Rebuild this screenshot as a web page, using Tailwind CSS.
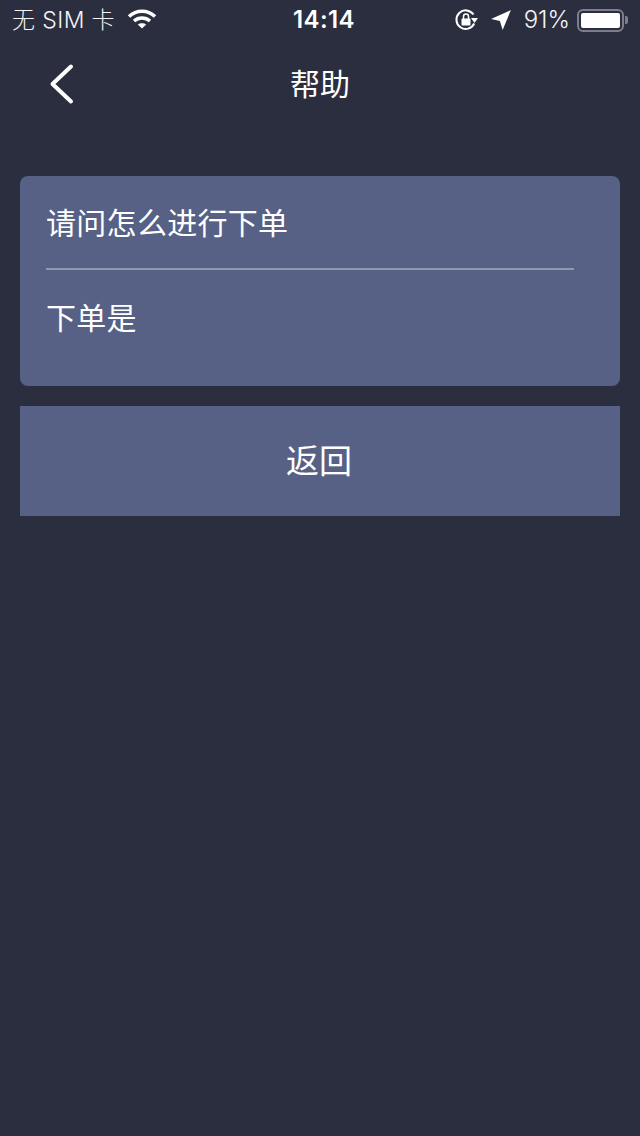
<!DOCTYPE html>
<html lang="zh-CN">
<head>
<meta charset="utf-8">
<script src="https://cdn.jsdelivr.net/npm/@tailwindcss/browser@4"></script>
</head>
<body class="m-0">
<div class="w-[640px] h-[1136px] bg-[#2b2e3f] text-white overflow-hidden font-['Inter','Noto_Sans_CJK_SC',sans-serif]">
  <div class="h-[40px] relative flex items-center justify-between pl-[12px] pr-[12px]">
    <div class="flex items-center">
      <span class="text-[23px] leading-[40px] tracking-[0.4px] text-[#f4f4f6] font-light">无 SIM 卡</span>
      <svg class="ml-[12px] mb-[2px]" width="30" height="22" viewBox="0 0 30 22" fill="none" stroke="white" stroke-width="3.4"><path d="M2 8.5 C9.5 1.5 20.5 1.5 28 8.5"/><path d="M7 13 C11.5 9 18.5 9 23 13"/><path d="M15 20.5 L10.8 16.6 C13 14.8 17 14.8 19.2 16.6 Z" fill="white" stroke="none"/></svg>
    </div>
    <span class="absolute left-0 right-0 top-0 text-center text-[24px] leading-[40px] font-semibold tracking-[0.4px] pl-[8px]">14:14</span>
    <div class="flex items-center">
      <svg width="24" height="24" viewBox="0 0 24 24" fill="none" class="mr-[12px]"><path d="M19.5 6.5 A9.3 9.3 0 1 0 20.2 15.5" stroke="white" stroke-width="2"/><path d="M17 10 L24 10 L20.5 15 Z" fill="white"/><rect x="7.5" y="10.5" width="9" height="7" rx="1" fill="white"/><path d="M9.5 11 V8.5 a2.5 2.5 0 0 1 5 0 V11" stroke="white" stroke-width="1.5"/></svg>
      <svg width="22" height="22" viewBox="0 0 20 20" class="mr-[12px]"><path d="M19 1 L11.5 19 L9 11 L1 9 Z" fill="white"/></svg>
      <span class="text-[24px] leading-[40px] text-[#f4f4f6] font-light mr-[7px]">91%</span>
      <div class="w-[47px] h-[23px] rounded-[6px] border-2 border-[#7c7e8a] p-[2px]"><div class="w-full h-full bg-white rounded-[2px]"></div></div>
      <div class="w-[3px] h-[8px] bg-[#7c7e8a] rounded-r-[2px] ml-[1px]"></div>
    </div>
  </div>
  <div class="h-[88px] relative flex items-center justify-center">
    <svg class="absolute left-[49px] top-[23px]" width="26" height="42" viewBox="0 0 26 42" fill="none" stroke="white" stroke-width="4" stroke-linecap="round" stroke-linejoin="round"><path d="M22 3.5 L3.5 21 L22 38.5"/></svg>
    <span class="text-[30px] leading-[40px] mt-[-1px]">帮助</span>
  </div>
  <div class="px-[20px] pt-[48px]">
    <div class="h-[210px] rounded-[8px] bg-[#576185] pl-[26px] pr-[46px]">
      <div class="h-[94px] border-b-2 border-[#9197b0] text-[30px] tracking-[0.3px] leading-[94px]">请问怎么进行下单</div>
      <div class="text-[30px] tracking-[0.3px] leading-[96px]">下单是</div>
    </div>
    <button class="mt-[20px] block w-full h-[110px] bg-[#576185] text-[33px] text-white pr-[2px] pt-[2px]">返回</button>
  </div>
</div>
</body>
</html>
